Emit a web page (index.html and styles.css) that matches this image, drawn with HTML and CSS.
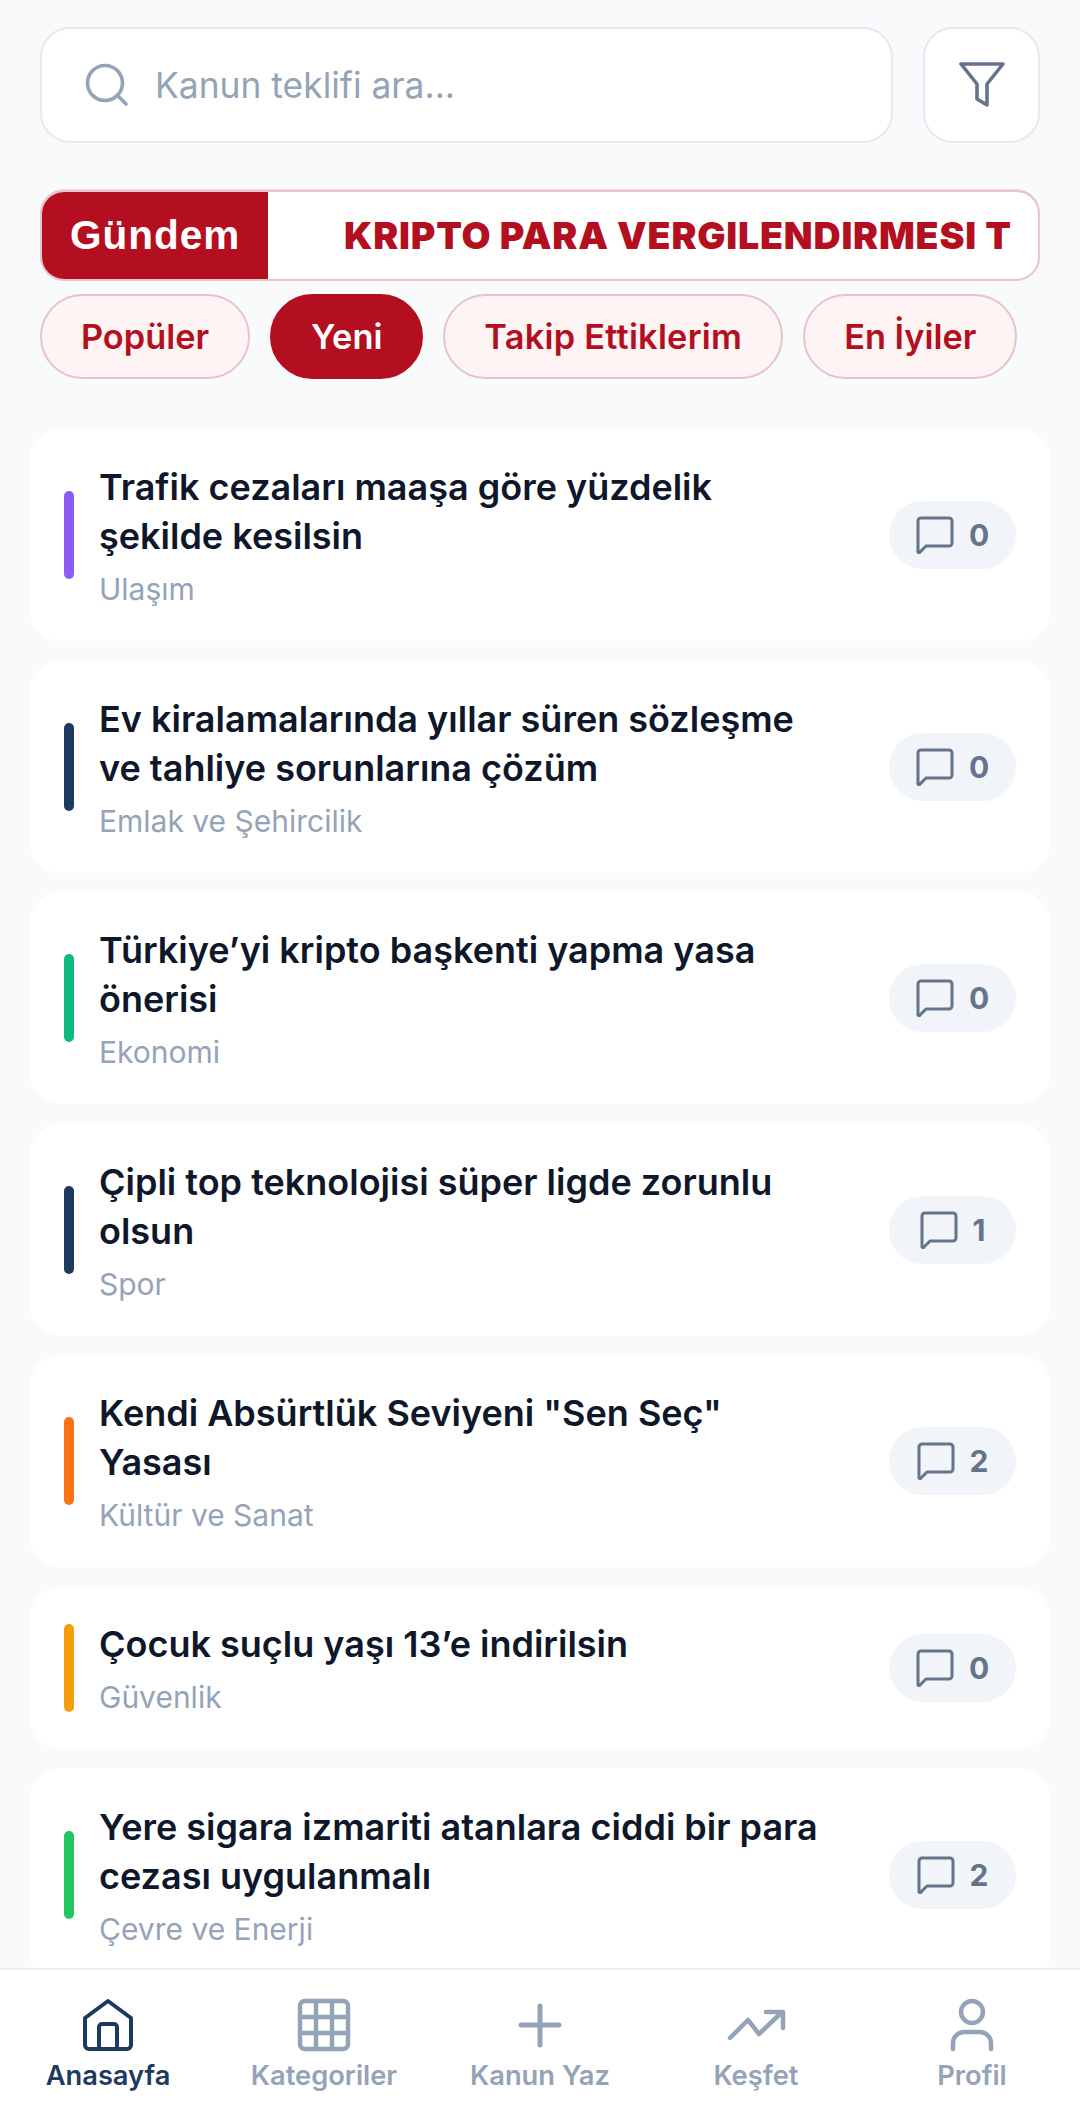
FILE: index.html
```html
<!DOCTYPE html>
<html lang="tr">
<head>
<meta charset="utf-8">
<title>Kanun</title>
<link rel="stylesheet" href="styles.css">
</head>
<body>
<div class="app">
  <main class="main">
    <div class="top">
      <div class="search">
        <svg class="search-ic" viewBox="0 0 44 44" fill="none" stroke="#94a3b8" stroke-width="3.6" stroke-linecap="round"><circle cx="20" cy="20" r="17.5"/><path d="M33 33l8 8"/></svg>
        <span>Kanun teklifi ara...</span>
      </div>
      <div class="filter">
        <svg viewBox="0 0 46 46" fill="none" stroke="#64748b" stroke-width="3.6" stroke-linejoin="round" stroke-linecap="round"><path d="M2 2h42L28 22v21l-10-6V22z"/></svg>
      </div>
    </div>
    <div class="ticker">
      <div class="ticker-label">Gündem</div>
      <div class="ticker-text">KRIPTO PARA VERGILENDIRMESI T</div>
    </div>
    <div class="pills">
      <span class="pill">Popüler</span>
      <span class="pill active">Yeni</span>
      <span class="pill wide">Takip Ettiklerim</span>
      <span class="pill">En İyiler</span>
    </div>
    <div class="cards">
      <article class="card">
        <i class="bar violet"></i>
        <div class="body"><h2>Trafik cezaları maaşa göre yüzdelik<br>şekilde kesilsin</h2><p>Ulaşım</p></div>
        <div class="count"><svg viewBox="0 0 38 38" fill="none" stroke="#64748b" stroke-width="3" stroke-linejoin="round"><path d="M5 2h28a3 3 0 0 1 3 3v22a3 3 0 0 1-3 3H10l-6 6a1 1 0 0 1-2-1V5a3 3 0 0 1 3-3z"/></svg><b>0</b></div>
      </article>
      <article class="card">
        <i class="bar navy"></i>
        <div class="body"><h2>Ev kiralamalarında yıllar süren sözleşme<br>ve tahliye sorunlarına çözüm</h2><p>Emlak ve Şehircilik</p></div>
        <div class="count"><svg viewBox="0 0 38 38" fill="none" stroke="#64748b" stroke-width="3" stroke-linejoin="round"><path d="M5 2h28a3 3 0 0 1 3 3v22a3 3 0 0 1-3 3H10l-6 6a1 1 0 0 1-2-1V5a3 3 0 0 1 3-3z"/></svg><b>0</b></div>
      </article>
      <article class="card">
        <i class="bar green"></i>
        <div class="body"><h2>Türkiye’yi kripto başkenti yapma yasa<br>önerisi</h2><p>Ekonomi</p></div>
        <div class="count"><svg viewBox="0 0 38 38" fill="none" stroke="#64748b" stroke-width="3" stroke-linejoin="round"><path d="M5 2h28a3 3 0 0 1 3 3v22a3 3 0 0 1-3 3H10l-6 6a1 1 0 0 1-2-1V5a3 3 0 0 1 3-3z"/></svg><b>0</b></div>
      </article>
      <article class="card">
        <i class="bar navy"></i>
        <div class="body"><h2>Çipli top teknolojisi süper ligde zorunlu<br>olsun</h2><p>Spor</p></div>
        <div class="count"><svg viewBox="0 0 38 38" fill="none" stroke="#64748b" stroke-width="3" stroke-linejoin="round"><path d="M5 2h28a3 3 0 0 1 3 3v22a3 3 0 0 1-3 3H10l-6 6a1 1 0 0 1-2-1V5a3 3 0 0 1 3-3z"/></svg><b>1</b></div>
      </article>
      <article class="card">
        <i class="bar orange"></i>
        <div class="body"><h2>Kendi Absürtlük Seviyeni "Sen Seç"<br>Yasası</h2><p>Kültür ve Sanat</p></div>
        <div class="count"><svg viewBox="0 0 38 38" fill="none" stroke="#64748b" stroke-width="3" stroke-linejoin="round"><path d="M5 2h28a3 3 0 0 1 3 3v22a3 3 0 0 1-3 3H10l-6 6a1 1 0 0 1-2-1V5a3 3 0 0 1 3-3z"/></svg><b>2</b></div>
      </article>
      <article class="card">
        <i class="bar amber"></i>
        <div class="body"><h2>Çocuk suçlu yaşı 13’e indirilsin</h2><p>Güvenlik</p></div>
        <div class="count"><svg viewBox="0 0 38 38" fill="none" stroke="#64748b" stroke-width="3" stroke-linejoin="round"><path d="M5 2h28a3 3 0 0 1 3 3v22a3 3 0 0 1-3 3H10l-6 6a1 1 0 0 1-2-1V5a3 3 0 0 1 3-3z"/></svg><b>0</b></div>
      </article>
      <article class="card">
        <i class="bar lime"></i>
        <div class="body"><h2>Yere sigara izmariti atanlara ciddi bir para<br>cezası uygulanmalı</h2><p>Çevre ve Enerji</p></div>
        <div class="count"><svg viewBox="0 0 38 38" fill="none" stroke="#64748b" stroke-width="3" stroke-linejoin="round"><path d="M5 2h28a3 3 0 0 1 3 3v22a3 3 0 0 1-3 3H10l-6 6a1 1 0 0 1-2-1V5a3 3 0 0 1 3-3z"/></svg><b>2</b></div>
      </article>
    </div>
  </main>
  <nav class="nav">
    <div class="tab on">
      <svg viewBox="0 0 54 54" fill="none" stroke="#1e3a5f" stroke-width="4" stroke-linejoin="round" stroke-linecap="round"><path d="M27 3 L50 20 V47 a4 4 0 0 1-4 4 H8 a4 4 0 0 1-4-4 V20 Z"/><path d="M18 51 V29 a3 3 0 0 1 3-3 h12 a3 3 0 0 1 3 3 V51"/></svg>
      <span>Anasayfa</span>
    </div>
    <div class="tab">
      <svg viewBox="0 0 54 54" fill="none" stroke="#94a3b8" stroke-width="4.5" stroke-linejoin="round"><rect x="3" y="3" width="48" height="48" rx="5"/><path d="M19 3v48M35 3v48M3 19h48M3 35h48"/></svg>
      <span>Kategoriler</span>
    </div>
    <div class="tab">
      <svg viewBox="0 0 54 54" fill="none" stroke="#94a3b8" stroke-width="5" stroke-linecap="round"><path d="M27 8v39M8 27h38"/></svg>
      <span>Kanun Yaz</span>
    </div>
    <div class="tab">
      <svg viewBox="0 0 54 54" fill="none" stroke="#94a3b8" stroke-width="4.5" stroke-linejoin="round" stroke-linecap="round"><path d="M1 40 L19 22 L30 36 L52 15"/><path d="M37 14 H54 V30"/></svg>
      <span>Keşfet</span>
    </div>
    <div class="tab">
      <svg viewBox="0 0 54 54" fill="none" stroke="#94a3b8" stroke-width="4.5" stroke-linecap="round"><circle cx="27" cy="14" r="11"/><path d="M8 51 V45 a11 11 0 0 1 11-11 h16 a11 11 0 0 1 11 11 v6"/></svg>
      <span>Profil</span>
    </div>
  </nav>
</div>
</body>
</html>
```
FILE: styles.css
```css
* { box-sizing: border-box; }
html, body { margin: 0; padding: 0; }
body { background: #f8fafc; font-family: Inter, "Noto Sans", sans-serif; }
.app { width: 1080px; height: 2127px; display: flex; flex-direction: column; overflow: hidden; }
.main { flex: 1; min-height: 0; overflow: hidden; padding-top: 27px; }
.top { display: flex; gap: 30px; padding: 0 40px; }
.search { flex: 1; height: 116px; background: #fff; border: 2px solid #e5e9f0; border-radius: 30px; display: flex; align-items: center; padding-left: 43px; gap: 26px; font-size: 35.4px; color: #94a3b8; }
.search-ic { width: 44px; height: 44px; }
.filter { width: 117px; height: 116px; background: #fff; border: 2px solid #e5e9f0; border-radius: 30px; display: flex; align-items: center; justify-content: center; }
.filter svg { width: 46px; height: 46px; }
.ticker { margin: 47px 40px 0; height: 91px; display: flex; background: #fff; border: 2px solid #e8c6cc; border-radius: 24px; overflow: hidden; box-shadow: 0 -1px 0 #eed4d9; }
.ticker-label { width: 228px; margin: -2px 0 -2px -2px; padding-left: 30px; background: #b30f20; color: #fff; font: 700 40.5px/91px "Liberation Sans", sans-serif; letter-spacing: 1px; }
.ticker-text { flex: 1; padding-left: 76px; color: #b30f20; font-size: 37.5px; font-weight: 900; line-height: 87px; letter-spacing: .8px; white-space: nowrap; overflow: hidden; }
.pills { display: flex; gap: 20px; margin: 13px 40px 0; }
.pill { height: 85px; padding: 0 39px; border: 2px solid #e6c3ca; border-radius: 43px; background: #fef4f4; color: #b30f20; font-size: 34.3px; font-weight: 600; line-height: 81px; white-space: nowrap; }
.pill.active { background: #b30f20; border-color: #b30f20; color: #fff; }
.pill.wide { letter-spacing: .25px; }
.cards { margin: 50px 30px 0; display: flex; flex-direction: column; gap: 19.5px; }
.card { flex: none; background: #fff; border-radius: 30px; padding: 0 34px 0 34px; display: flex; align-items: center; min-height: 212px; }
.card:nth-child(6) { min-height: 162px; }
.card:last-child { min-height: 214px; }
.bar { flex: none; width: 10px; height: 88px; border-radius: 5px; margin-right: 25px; }
.violet { background: #8b5cf6; }
.navy { background: #1e3a5f; }
.green { background: #10b981; }
.orange { background: #f97316; }
.amber { background: #f59e0b; }
.lime { background: #22c55e; }
.body { flex: 1; min-width: 0; padding-top: 2px; }
h2 { margin: 0; font-size: 36px; line-height: 49px; font-weight: 600; color: #0f172a; }
p { margin: 8px 0 0; font-size: 30px; line-height: 40px; color: #94a3b8; }
.count { flex: none; width: 127px; height: 68px; border-radius: 34px; background: #f1f5f9; display: flex; align-items: center; justify-content: center; gap: 15px; font-size: 30px; color: #64748b; }
.count svg { width: 38px; height: 38px; }
.count b { font-weight: 700; }
.nav { flex: none; height: 159px; background: #fff; border-top: 2px solid #eef1f5; display: grid; grid-template-columns: repeat(5, 216px); position: relative; z-index: 1; padding-top: 28px; }
.tab { display: flex; flex-direction: column; align-items: center; gap: 7px; color: #94a3b8; font-size: 27.3px; font-weight: 600; }
.tab svg { width: 54px; height: 54px; overflow: visible; }
.tab.on { color: #1e3a5f; }
```
